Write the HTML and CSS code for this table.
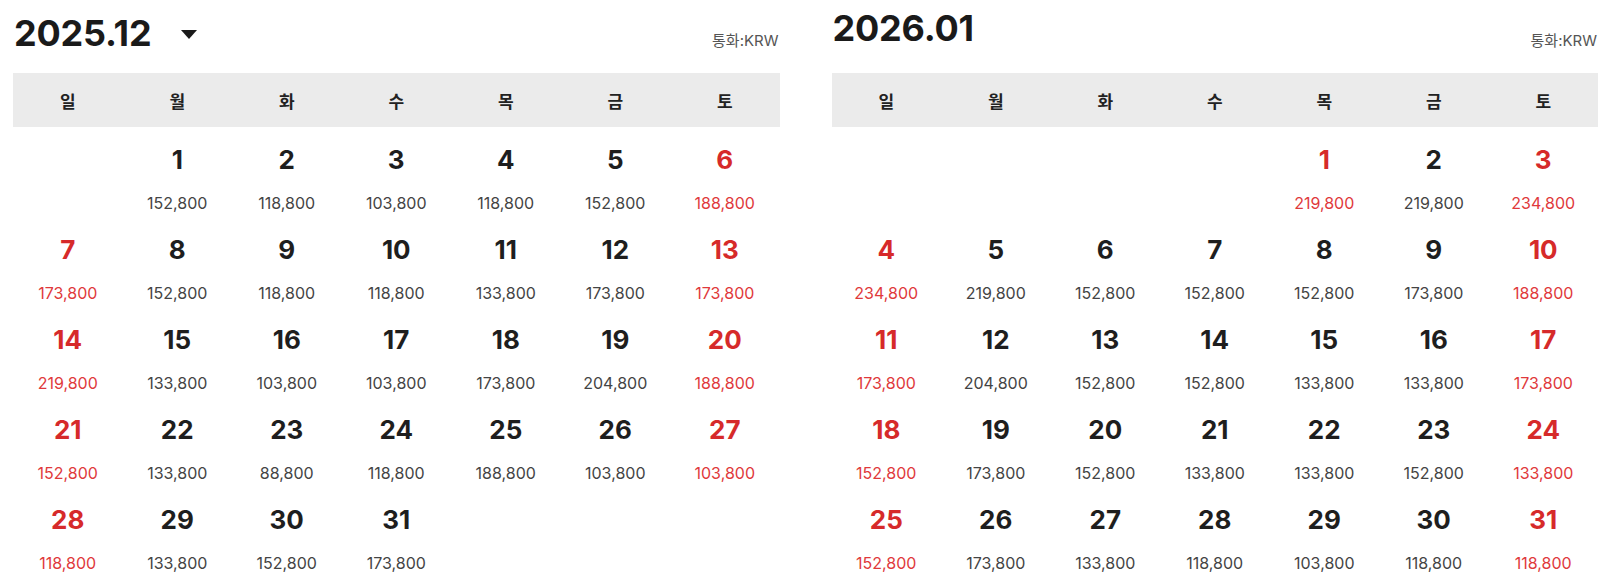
FILE: index.html
```html
<!DOCTYPE html>
<html lang="ko">
<head>
<meta charset="utf-8">
<link rel="stylesheet" href="styles.css">
</head>
<body>
<div class="months">
  <section class="cal">
    <div class="cal-head">
      <div class="title-select">
        <span class="title">2025.12</span>
        <span class="caret"></span>
      </div>
      <span class="currency">통화:KRW</span>
    </div>
    <div class="week">
      <span>일</span><span>월</span><span>화</span><span>수</span><span>목</span><span>금</span><span>토</span>
    </div>
    <div class="days">
      <div class="day empty"></div>
      <div class="day"><b>1</b><i>152,800</i></div>
      <div class="day"><b>2</b><i>118,800</i></div>
      <div class="day"><b>3</b><i>103,800</i></div>
      <div class="day"><b>4</b><i>118,800</i></div>
      <div class="day"><b>5</b><i>152,800</i></div>
      <div class="day red"><b>6</b><i>188,800</i></div>

      <div class="day red"><b>7</b><i>173,800</i></div>
      <div class="day"><b>8</b><i>152,800</i></div>
      <div class="day"><b>9</b><i>118,800</i></div>
      <div class="day"><b>10</b><i>118,800</i></div>
      <div class="day"><b>11</b><i>133,800</i></div>
      <div class="day"><b>12</b><i>173,800</i></div>
      <div class="day red"><b>13</b><i>173,800</i></div>

      <div class="day red"><b>14</b><i>219,800</i></div>
      <div class="day"><b>15</b><i>133,800</i></div>
      <div class="day"><b>16</b><i>103,800</i></div>
      <div class="day"><b>17</b><i>103,800</i></div>
      <div class="day"><b>18</b><i>173,800</i></div>
      <div class="day"><b>19</b><i>204,800</i></div>
      <div class="day red"><b>20</b><i>188,800</i></div>

      <div class="day red"><b>21</b><i>152,800</i></div>
      <div class="day"><b>22</b><i>133,800</i></div>
      <div class="day"><b>23</b><i>88,800</i></div>
      <div class="day"><b>24</b><i>118,800</i></div>
      <div class="day"><b>25</b><i>188,800</i></div>
      <div class="day"><b>26</b><i>103,800</i></div>
      <div class="day red"><b>27</b><i>103,800</i></div>

      <div class="day red"><b>28</b><i>118,800</i></div>
      <div class="day"><b>29</b><i>133,800</i></div>
      <div class="day"><b>30</b><i>152,800</i></div>
      <div class="day"><b>31</b><i>173,800</i></div>
    </div>
  </section>

  <section class="cal">
    <div class="cal-head">
      <span class="title plain">2026.01</span>
      <span class="currency">통화:KRW</span>
    </div>
    <div class="week">
      <span>일</span><span>월</span><span>화</span><span>수</span><span>목</span><span>금</span><span>토</span>
    </div>
    <div class="days">
      <div class="day empty"></div>
      <div class="day empty"></div>
      <div class="day empty"></div>
      <div class="day empty"></div>
      <div class="day red"><b>1</b><i>219,800</i></div>
      <div class="day"><b>2</b><i>219,800</i></div>
      <div class="day red"><b>3</b><i>234,800</i></div>

      <div class="day red"><b>4</b><i>234,800</i></div>
      <div class="day"><b>5</b><i>219,800</i></div>
      <div class="day"><b>6</b><i>152,800</i></div>
      <div class="day"><b>7</b><i>152,800</i></div>
      <div class="day"><b>8</b><i>152,800</i></div>
      <div class="day"><b>9</b><i>173,800</i></div>
      <div class="day red"><b>10</b><i>188,800</i></div>

      <div class="day red"><b>11</b><i>173,800</i></div>
      <div class="day"><b>12</b><i>204,800</i></div>
      <div class="day"><b>13</b><i>152,800</i></div>
      <div class="day"><b>14</b><i>152,800</i></div>
      <div class="day"><b>15</b><i>133,800</i></div>
      <div class="day"><b>16</b><i>133,800</i></div>
      <div class="day red"><b>17</b><i>173,800</i></div>

      <div class="day red"><b>18</b><i>152,800</i></div>
      <div class="day"><b>19</b><i>173,800</i></div>
      <div class="day"><b>20</b><i>152,800</i></div>
      <div class="day"><b>21</b><i>133,800</i></div>
      <div class="day"><b>22</b><i>133,800</i></div>
      <div class="day"><b>23</b><i>152,800</i></div>
      <div class="day red"><b>24</b><i>133,800</i></div>

      <div class="day red"><b>25</b><i>152,800</i></div>
      <div class="day"><b>26</b><i>173,800</i></div>
      <div class="day"><b>27</b><i>133,800</i></div>
      <div class="day"><b>28</b><i>118,800</i></div>
      <div class="day"><b>29</b><i>103,800</i></div>
      <div class="day"><b>30</b><i>118,800</i></div>
      <div class="day red"><b>31</b><i>118,800</i></div>
    </div>
  </section>
</div>
</body>
</html>
```

FILE: styles.css
```css
* { box-sizing: border-box; }

html, body {
  margin: 0;
  padding: 0;
  background: #fff;
}

body {
  font-family: "Inter", "Noto Sans CJK KR", sans-serif;
  color: #1e1e1e;
}

.months {
  display: flex;
  gap: 52px;
  padding: 0 13px;
}

.cal {
  flex: 1 1 0;
  min-width: 0;
}

.cal-head {
  height: 73px;
  display: flex;
  justify-content: space-between;
  align-items: flex-start;
}

.title-select {
  display: flex;
  align-items: center;
  padding-top: 15px;
}

.title {
  font-size: 36px;
  line-height: 36px;
  font-weight: 700;
  letter-spacing: -0.2px;
  color: #1a1a1a;
  padding-left: 1px;
}

.title.plain {
  padding-top: 10px;
}

.caret {
  width: 0;
  height: 0;
  margin-left: 30px;
  margin-top: 2px;
  border-left: 8.5px solid transparent;
  border-right: 8.5px solid transparent;
  border-top: 9px solid #1a1a1a;
}

.currency {
  padding-top: 33px;
  font-size: 15px;
  line-height: 15px;
  color: #555;
  margin-right: 1px;
}

.week {
  display: grid;
  grid-template-columns: repeat(7, 1fr);
  height: 54px;
  background: #ebebeb;
  align-items: center;
}

.week span {
  text-align: center;
  font-size: 17px;
  font-weight: 700;
  color: #222;
}

.days {
  display: grid;
  grid-template-columns: repeat(7, 1fr);
  grid-auto-rows: 90px;
}

.day {
  display: flex;
  flex-direction: column;
  align-items: center;
  padding-top: 20px;
}

.day b {
  font-size: 26px;
  line-height: 26px;
  font-weight: 700;
  color: #1e1e1e;
}

.day i {
  font-style: normal;
  font-size: 16px;
  line-height: 16px;
  margin-top: 22px;
  color: #444;
}

.day.red b {
  color: #d62a2a;
}

.day.red i {
  color: #e0393b;
}
```
